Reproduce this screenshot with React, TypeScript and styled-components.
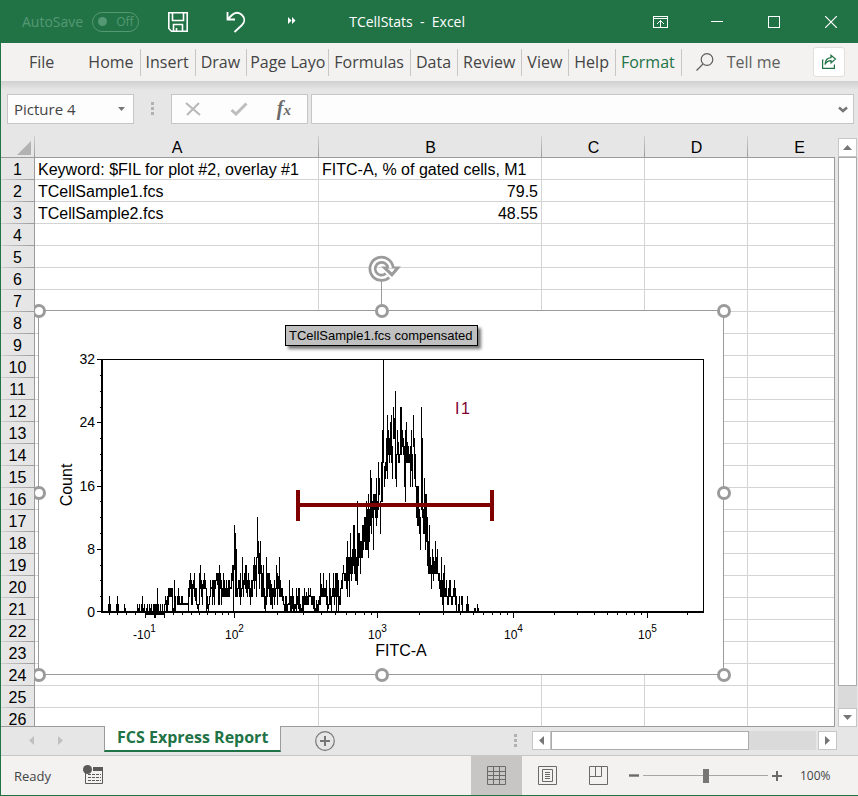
import React from "react";
import styled, { createGlobalStyle } from "styled-components";

const GREEN = "#217346";
const UI = '"Open Sans", "Noto Sans", sans-serif';
const ARIAL = '"Liberation Sans", Arial, sans-serif';

const Global = createGlobalStyle`
  *, *::before, *::after { box-sizing: border-box; }
  html, body { margin: 0; padding: 0; }
  button, input, select { font-family: inherit; color: inherit; margin: 0; border-radius: 0; }
  button { padding: 0; border: 0; background: none; }
  svg { display: block; flex: none; }
`;

const Window = styled.div`
  display: flex;
  flex-direction: column;
  height: 100vh;
  overflow: hidden;
  background: #e6e6e6;
  border-left: 1px solid ${GREEN};
  border-bottom: 1px solid ${GREEN};
  font-family: ${UI};
  color: #444;
`;

/* ---------- title bar ---------- */

const TitleBar = styled.header`
  display: flex;
  align-items: center;
  flex: none;
  height: 43px;
  padding-left: 21px;
  background: ${GREEN};
  color: #fff;
  font-size: 14px;
`;

const AutoSave = styled.label`
  display: flex;
  align-items: center;
  gap: 9px;
  height: 40px;
  color: #559874;
`;

const Toggle = styled.button`
  display: flex;
  align-items: center;
  gap: 9px;
  width: 47px;
  height: 20px;
  padding-left: 5px;
  border: 1px solid #559874;
  border-radius: 10px;
  color: #559874;
  font-size: 12px;
  &::before {
    content: "";
    width: 9px;
    height: 9px;
    border-radius: 50%;
    background: #559874;
  }
`;

const QuickTools = styled.div`
  display: flex;
  align-items: center;
  gap: 38px;
  margin-left: 29px;
`;

const IconButton = styled.button`
  display: flex;
  align-items: center;
  justify-content: center;
`;

const Title = styled.h1`
  flex: 1;
  margin: 0;
  padding-left: 49px;
  font-size: 14px;
  font-weight: 400;
  line-height: 40px;
  white-space: pre;
`;

const WindowButtons = styled.div`
  display: flex;
  gap: 3px;
`;

const WindowButton = styled(IconButton)`
  width: 54px;
  height: 42px;
`;

/* ---------- ribbon tabs ---------- */

const Ribbon = styled.nav`
  display: flex;
  align-items: center;
  flex: none;
  height: 38px;
  background: #f3f2f1;
  font-size: 16px;
`;

const RibbonTab = styled.button<{ $file?: boolean; $active?: boolean; $tight?: boolean }>`
  flex: none;
  height: 27px;
  padding: ${(p) => (p.$tight ? "0 3px" : "0 6px 0 5px")};
  text-align: left;
  white-space: nowrap;
  line-height: 26px;
  font-size: 16px;
  color: ${(p) => (p.$active ? GREEN : "#444")};
  border-right: 1px solid ${(p) => (p.$file ? "transparent" : "#c8c6c4")};
  margin: ${(p) => (p.$file ? "0 22px 0 23px" : "0")};
`;

const TellMe = styled.button`
  display: flex;
  align-items: center;
  gap: 13px;
  margin-left: 14px;
  font-size: 16px;
  color: #605e5c;
`;

const Share = styled(IconButton)`
  width: 32px;
  height: 30px;
  margin: 0 13px 0 auto;
  background: #fff;
  border: 1px solid #e1dfdd;
  border-radius: 3px;
`;

/* ---------- formula bar ---------- */

const FormulaBar = styled.div`
  display: flex;
  flex: none;
  height: 55px;
  padding: 13px 4px 0 6px;
  background: linear-gradient(#d0d0d0, #e6e6e6 9px);
`;

const Field = styled.div<{ $grow?: boolean }>`
  display: flex;
  align-items: center;
  height: 30px;
  width: ${(p) => (p.$grow ? "auto" : "127px")};
  flex: ${(p) => (p.$grow ? "1" : "none")};
  background: #fdfdfd;
  border: 1px solid #c6c6c6;
`;

const NameSelect = styled.select`
  flex: 1;
  height: 28px;
  padding: 0 0 0 6px;
  appearance: none;
  border: 0;
  background: transparent;
  font-size: 15px;
`;

const FormulaInput = styled.input`
  flex: 1;
  min-width: 0;
  height: 28px;
  padding: 0 8px;
  border: 0;
  outline: 0;
  background: transparent;
  font-size: 15px;
`;

const FieldArrow = styled.span<{ $inset?: boolean }>`
  padding-right: ${(p) => (p.$inset ? "8px" : "5px")};
  pointer-events: none;
`;

const Dots = styled.span`
  display: flex;
  flex-direction: column;
  flex: none;
  gap: 2px;
  width: 3px;
  &::before, &::after, i {
    content: "";
    display: block;
    width: 3px;
    height: 3px;
    background: #b1b1b1;
  }
`;

const FormulaDots = styled.div`
  display: flex;
  align-items: center;
  justify-content: center;
  width: 37px;
  height: 28px;
`;

const FormulaActions = styled.div`
  display: flex;
  align-items: center;
  justify-content: space-between;
  width: 137px;
  height: 30px;
  margin-right: 3px;
  padding: 0 16px 0 13px;
  background: #fdfdfd;
  border: 1px solid #c6c6c6;
`;

const FxLabel = styled.span`
  font: italic bold 20px/26px "Liberation Serif", serif;
  color: #6a6a6a;
  small { font-size: 15px; }
`;

/* ---------- sheet ---------- */

const SheetArea = styled.main`
  display: flex;
  flex: 1;
  min-height: 0;
`;

const Sheet = styled.div`
  position: relative;
  flex: 1;
  min-width: 0;
  overflow: hidden;
  background: #fff;
  border-bottom: 1px solid #9b9b9b;
  &::after {
    content: "";
    position: absolute;
    inset: 22px 0 0 auto;
    width: 1px;
    background: #9b9b9b;
  }
`;

const Grid = styled.table`
  table-layout: fixed;
  width: 100%;
  min-width: 850px;
  border-spacing: 0;
  font: 16px/19px ${ARIAL};
  color: #000;
`;

const Col = styled.col<{ $w?: number }>`
  width: ${(p) => (p.$w ? `${p.$w}px` : "auto")};
`;

const ColHead = styled.th`
  height: 22px;
  padding: 2px 0 0;
  font-weight: 400;
  border-bottom: 1px solid #9b9b9b;
  background: linear-gradient(#d0d0d0, #9b9b9b) right / 1px 100% no-repeat #e6e6e6;
`;

const Corner = styled.td`
  height: 22px;
  padding: 2px 0 0 16px;
  border-bottom: 1px solid #9b9b9b;
  background: linear-gradient(#d0d0d0, #9b9b9b) right / 1px 100% no-repeat #e6e6e6;
`;

const RowHead = styled.th`
  height: 22px;
  padding: 1px 0 0;
  font-weight: 400;
  line-height: 20px;
  border-right: 1px solid #9b9b9b;
  background: linear-gradient(90deg, #d0d0d0, #9b9b9b) bottom / 100% 1px no-repeat #e6e6e6;
`;

const Cell = styled.td<{ $right?: boolean }>`
  height: 22px;
  padding: 2px 3px 0;
  white-space: nowrap;
  text-align: ${(p) => (p.$right ? "right" : "left")};
  border-right: 1px solid #d4d4d4;
  border-bottom: 1px solid #d4d4d4;
`;

const ObjectLayer = styled.div`
  position: absolute;
  inset: 22px 0 0 34px;
  overflow: hidden;
`;

const Picture = styled.figure`
  position: absolute;
  left: 3px;
  top: 152px;
  width: 686px;
  height: 365px;
  margin: 0;
  background: #fff;
  border: 1px solid #9b9b9b;
`;

const HandleFrame = styled.div`
  position: absolute;
  inset: 0 -1px -1px 0;
`;

const Handle = styled.span<{ $x: number; $y: number }>`
  position: absolute;
  left: calc(${(p) => p.$x}% - 7px);
  top: calc(${(p) => p.$y}% - 7px);
  width: 14px;
  height: 14px;
  border: 3px solid #9b9b9b;
  border-radius: 50%;
  background: #fff;
`;

const Rotate = styled.div`
  position: absolute;
  left: 328px;
  bottom: 100%;
  height: 56px;
`;

const ChartTitle = styled.figcaption`
  position: absolute;
  left: 246px;
  top: 14px;
  height: 21px;
  padding: 0 4px 0 3px;
  font: 13px/20px ${ARIAL};
  white-space: nowrap;
  color: #000;
  background: #c0c0c0;
  border: 1px solid #000;
  box-shadow: 3px 3px 3px #777;
`;

/* ---------- scroll bars ---------- */

const VScroll = styled.div`
  display: flex;
  flex-direction: column;
  flex: none;
  width: 19px;
  margin: 2px 1px 0 3px;
`;

const ScrollButton = styled.button`
  display: flex;
  align-items: center;
  justify-content: center;
  flex: none;
  width: 19px;
  height: 19px;
  background: #fff;
  border: 1px solid #c6c6c6;
`;

const VTrack = styled.div`
  flex: 1;
  min-height: 0;
  background: #dadada;
`;

const VThumb = styled.div`
  height: 96%;
  background: #fff;
  border: 1px solid #ababab;
`;

const TabStrip = styled.div`
  display: flex;
  flex: none;
  height: 29px;
  border-bottom: 1px solid #c6c6c6;
`;

const SheetNav = styled.div`
  display: flex;
  gap: 24px;
  width: 103px;
  padding: 9px 0 0 28px;
  align-items: flex-start;
`;

const SheetTab = styled.button`
  position: relative;
  height: 26px;
  margin-top: -1px;
  padding: 0 12px 2px;
  background: #fff;
  border-left: 1px solid #9b9b9b;
  border-right: 1px solid #9b9b9b;
  border-bottom: 2px solid ${GREEN};
  color: ${GREEN};
  font-size: 16px;
  font-weight: 700;
  line-height: 22px;
  white-space: nowrap;
`;

const AddSheet = styled(IconButton)`
  margin-left: 34px;
  height: 27px;
`;

const HScroll = styled.div`
  display: flex;
  align-items: center;
  margin-left: auto;
  padding-right: 21px;
  height: 27px;
`;

const HTrack = styled.div`
  width: 265px;
  height: 19px;
  margin-right: 2px;
  background: #dadada;
`;

const HThumb = styled.div`
  width: 198px;
  height: 19px;
  background: #fff;
  border: 1px solid #ababab;
`;

const ScrollDots = styled.div`
  margin-right: 15px;
`;

/* ---------- status bar ---------- */

const StatusBar = styled.footer`
  display: flex;
  align-items: center;
  flex: none;
  height: 39px;
  padding-left: 13px;
  background: #f3f2f1;
  font-size: 13px;
`;

const Macro = styled(IconButton)`
  margin-left: 32px;
  padding-bottom: 2px;
`;

const Views = styled.div`
  display: flex;
  margin-left: auto;
`;

const ViewButton = styled(IconButton)<{ $on?: boolean }>`
  width: 51px;
  height: 39px;
  background: ${(p) => (p.$on ? "#c8c6c4" : "transparent")};
`;

const ZoomControls = styled.div`
  display: flex;
  align-items: center;
  gap: 4px;
  margin-left: 5px;
`;

const Slider = styled.input`
  width: 125px;
  height: 14px;
  appearance: none;
  background: linear-gradient(#a6a6a6, #a6a6a6) center / 100% 1px no-repeat;
  &::-webkit-slider-thumb {
    appearance: none;
    width: 6px;
    height: 14px;
    background: #767676;
  }
`;

const ZoomValue = styled.output`
  width: 72px;
  padding-left: 14px;
  font-size: 12px;
`;

/* ---------- chart ---------- */

const ChartSvg = styled.svg`
  position: absolute;
  left: 0;
  top: 0;
  font-family: ${ARIAL};
  fill: #000;
`;

/* Runs of "low-high" counts, one entry per horizontal pixel from the start. */
const RUNS: [number, string][] = [
  [108, "0-1 0-2 0-1"],
  [116, "0-1 0-2 0-1"],
  [124, "0-1 0-.5"],
  [137, "0-1 0-.5 0-1 0-0 0-1 0-2 0-.5 0-1 0-0 0-.5 0-1 0-0 0-1 0-.5 0-1 0-0 0-1 0-1 0-1 0-1 0-3 0-1 0-0 0-1 0-0 0-1 0-0 0-1 1-2 0-1.5 0-2 1-3 2-3 2-3 2-3 0-3 0-.5"],
  [174, "0-4 0-2 0-0 1-2 1-3 1-2 1-1.2 1-2 1-2 1-1.2 1-1.2 1-1.2 1-1.2 1-1.2 0-3 2-4 3-5 1-4 1-3.5 3-4 2-5 1.5-3 1-3 .5-1 0-1 1-5"],
  [200, "3-6 2-4 1-3.5 3-4 3-5 3-4 0-3 .5-2 0-1 1-2 2-4 3-3.2 1-4 2-4 1-4 3-4 4-5 3.5-5 1-5 1-6"],
  [220, "3-5 1-4 2-3 2-5 2-4 2-3 2-4 2-3 2-4 2-4 3-3.2 3-5 4-6 0-6 5.5-11 2-10 2-8 2-3 3-4 2-4"],
  [240, "1-5 2-3 3-7 2-4 3.5-5 3-6 2.5-6 2-4 3-5 2-4 1-3 2-4 2-4 4-6 3-7 4-6 2-7 7-12 5-9 3-7.5"],
  [260, "5-9 2-6 2-5 2-6 .5-3 0-2 1-7 2-5 3-5 2-5 1-4 1-3.5 .5-3 2-3 1-4 2-3 3-6 1-5 3-4.5 2-7"],
  [280, "2-4 2-3 1.5-3 1-2 0-1 0-2 0-2 0-1 1-1.2 1-4 0-2 0-2 .5-3 0-2 0-1 .5-1 0-3 1-2 .5-3 0-3"],
  [300, "0-1 0-.5 0-2 0-2 1-3 1-2 1-2.5 1-2 1-3 2-2.2 2-3 1-2 1-2 .5-2 0-2 0-.5 0-1.5 0-1 0-1.5 1-2"],
  [320, "1-5 2-3.5 2-3 2-5 2-3 2-3 1-4 0-2 .5-1 1-5 1-3 0-2 2-3 2-5 1-3 2-5 0-5 2-5 0-4 1-2"],
  [340, "1-3 3-4 3-5 5-6 4-5 4-5 3-7 2-9 4-7 2-7 5-10 4-7 5-8 6-11 5-11 4-8 4-7 3.5-14 6-10 7-10"],
  [360, "5-9 7-9 7-11 8-11 9-12 8-12 8-14 8-13 7-15 9-13 11-18 10-17 12-14 8-15 13-15 12-15 11-17 12-14 13-19 15-17"],
  [380, "10-14 14-19 14-23 19-32 16-18.5 17-19 18-22 17-25 20-23 19-22 20-24 19-25 17-21 22-26 22-24.5 17-28 16-20 20-23 19-21.5 19-20"],
  [400, "20-26 20-26 21-23 20-22 16-21 14-23 19-24 19-21.5 19-21 19-20 16-21 18-23 16-20 21-25 17-22 16-20 12-16 11-16 11-16 10-13"],
  [420, "8-12 13-26 12-22 10-13 10-17 8-15 9-15 6-12 5-9 5-11 5-7 3-6 5-8 4-7 5-6.5 5-9 5-7 5-8 4-5 3-5"],
  [440, "2-4 2-7 1-4 0-5 2-6 2-3 2-4 1-2 1-3 2-4 2-4 1-2 1-2 2-3 2-4 1-3 0-2 0-0 0-1 0-2 0-0 1-2 0-2"],
  [466, "0-1 0-2 0-1"],
  [474, "0-.5 0-.5 0-0 0-1 0-.5"],
];

const yOf = (count: number) => Math.round(612 - count * 7.9);

const histogram = RUNS.map(([start, run]) =>
  run
    .split(" ")
    .map((pair, i) => {
      const [low, high] = pair.split("-").map(Number);
      return `M${start + i + 0.5} ${yOf(low) + 1}V${yOf(high)}`;
    })
    .join("")
).join("");

const MINOR = [
  109, 117, 126, 135, 173, 182, 191, 199, 207, 215, 222, 228, 277, 303, 321, 335, 346, 355, 364, 371,
  419, 443, 460, 473, 483, 492, 500, 507, 554, 577, 594, 607, 617, 626, 634, 641, 687,
];
const MAJOR = [145, 164, 234, 377, 513, 647];
const X_LABELS: [number, string, string][] = [
  [133, "-10", "1"],
  [225, "10", "2"],
  [368, "10", "3"],
  [504, "10", "4"],
  [638, "10", "5"],
];

function Chart() {
  return (
    <ChartSvg width="684" height="363" viewBox="39 311 684 363" role="img" aria-label="FITC-A histogram">
      <g shapeRendering="crispEdges" stroke="#000" fill="none">
        <path d="M102 359.5H703.5V612" />
        <path d="M102 359V613M101 612H704" strokeWidth="2" />
        <path d={[0, 8, 16, 24, 32].map((v) => `M97 ${yOf(v) - 0.5 + (v ? 1 : 0)}h4`).join("")} />
        <path d={[2, 4, 6, 10, 12, 14, 18, 20, 22, 26, 28, 30].map((v) => `M100 ${yOf(v) + 0.5}h2`).join("")} />
        <path d={MAJOR.map((x) => `M${x + 0.5} 613v5`).join("") + MINOR.map((x) => `M${x + 0.5} 613v2`).join("")} />
        <path d="M145 614H165" strokeWidth="2" />
        <path d="M155 613V618" strokeWidth="2" />
        <path d={histogram} />
      </g>
      <g shapeRendering="crispEdges" fill="#800000">
        <rect x="296" y="490" width="4" height="31" />
        <rect x="490" y="490" width="4" height="31" />
        <rect x="299" y="503" width="192" height="4" />
      </g>
      <g fontSize="14" textAnchor="end">
        {[0, 8, 16, 24, 32].map((v) => (
          <text key={v} x="95" y={yOf(v) + 5}>{v}</text>
        ))}
      </g>
      {X_LABELS.map(([x, base, power]) => (
        <text key={x} x={x} y="639" fontSize="12">
          {base}
          <tspan dy="-7" fontSize="10">{power}</tspan>
        </text>
      ))}
      <text x="401" y="656" fontSize="16" textAnchor="middle">FITC-A</text>
      <text fontSize="16" textAnchor="middle" transform="translate(72 485) rotate(-90)">Count</text>
      <text x="455 461" y="414" fontSize="16" fill="#800030">I1</text>
    </ChartSvg>
  );
}

/* ---------- icons ---------- */

const Triangle = ({ dir, color = "#767676", size = 5 }: { dir: "up" | "down" | "left" | "right"; color?: string; size?: number }) => {
  const s = size;
  const d = {
    up: `M0 ${s}H${2 * s - 1}L${s - 0.5} 0Z`,
    down: `M0 0H${2 * s - 1}L${s - 0.5} ${s}Z`,
    left: `M${s} 0V${2 * s - 1}L0 ${s - 0.5}Z`,
    right: `M0 0V${2 * s - 1}L${s} ${s - 0.5}Z`,
  }[dir];
  const vertical = dir === "up" || dir === "down";
  return (
    <svg width={vertical ? 2 * s - 1 : s} height={vertical ? s : 2 * s - 1}>
      <path d={d} fill={color} />
    </svg>
  );
};

const SaveIcon = () => (
  <svg width="20" height="20" fill="none" stroke="#fff" strokeWidth="1.6">
    <path d="M.8 .8H19.2V19.2H3.5L.8 16.5ZM4.5 .8V8.5H15.5V.8M5.5 19V12.5H14.5V19M8.5 19V16" />
  </svg>
);

const UndoIcon = () => (
  <svg width="20" height="22" fill="none" stroke="#fff" strokeWidth="1.8">
    <path d="M1.5 1V8.5H9M2 8L6 4C9 1 13 1 16 4C19 7 19 11 16 14L8.5 21" />
  </svg>
);

const cells: Record<string, [string, string]> = {
  1: ["Keyword: $FIL for plot #2, overlay #1", "FITC-A, % of gated cells, M1"],
  2: ["TCellSample1.fcs", "79.5"],
  3: ["TCellSample2.fcs", "48.55"],
};

const TABS = ["Home", "Insert", "Draw", "Page Layo", "Formulas", "Data", "Review", "View", "Help", "Format"];
const HANDLES = [[0, 0], [50, 0], [100, 0], [0, 50], [100, 50], [0, 100], [50, 100], [100, 100]];

export default function App() {
  return (
    <Window>
      <Global />
      <TitleBar>
        <AutoSave>
          AutoSave
          <Toggle role="switch" aria-checked="false">Off</Toggle>
        </AutoSave>
        <QuickTools>
          <IconButton aria-label="Save"><SaveIcon /></IconButton>
          <IconButton aria-label="Undo"><UndoIcon /></IconButton>
          <IconButton aria-label="More commands">
            <svg width="16" height="14" fill="#fff"><path d="M4 2L7.500 5.500L4 9ZM8 2L11.500 5.500L8 9Z" /></svg>
          </IconButton>
        </QuickTools>
        <Title>{"TCellStats  -  Excel"}</Title>
        <WindowButtons>
          <WindowButton aria-label="Ribbon display options">
            <svg width="15" height="12" fill="none" stroke="#fff" shapeRendering="crispEdges">
              <path d="M.5 .5H14.5V11.5H.5ZM0 2.5H15M7.5 4V12" />
              <path d="M4 8L7.5 4.5L11 8" shapeRendering="auto" />
            </svg>
          </WindowButton>
          <WindowButton aria-label="Minimize">
            <svg width="12" height="1"><path d="M0 .5H12" stroke="#fff" /></svg>
          </WindowButton>
          <WindowButton aria-label="Maximize">
            <svg width="12" height="12"><rect x=".5" y=".5" width="11" height="11" fill="none" stroke="#fff" /></svg>
          </WindowButton>
          <WindowButton aria-label="Close">
            <svg width="12" height="12"><path d="M0 0L12 12M12 0L0 12" stroke="#fff" strokeWidth="1.2" /></svg>
          </WindowButton>
        </WindowButtons>
      </TitleBar>

      <Ribbon>
        <RibbonTab $file>File</RibbonTab>
        {TABS.map((t) => (
          <RibbonTab key={t} $active={t === "Format"} $tight={t === "Page Layo"}>{t}</RibbonTab>
        ))}
        <TellMe>
          <svg width="18" height="18" fill="none" stroke="#605e5c" strokeWidth="1.2">
            <circle cx="11" cy="6.5" r="5.8" /><path d="M7 11L.5 17.5" />
          </svg>
          Tell me
        </TellMe>
        <Share aria-label="Share">
          <svg width="16" height="16" fill="none" stroke={GREEN} strokeWidth="1.2">
            <path d="M2.5 6H1.6V14.4H13.4V10.5" />
            <path d="M10 1.2L14.5 5L10 9V6.6C7.500 6.600 5.500 7.500 4 10.500C4.200 6.500 6.300 4 10 3.700Z" />
          </svg>
        </Share>
      </Ribbon>

      <FormulaBar>
        <Field>
          <NameSelect aria-label="Name box"><option>Picture 4</option></NameSelect>
          <FieldArrow $inset><Triangle dir="down" size={4} /></FieldArrow>
        </Field>
        <FormulaDots><Dots><i /></Dots></FormulaDots>
        <FormulaActions>
          <IconButton aria-label="Cancel">
            <svg width="16" height="14"><path d="M1 1L15 13M14 1L2 13" stroke="#b8b8b8" strokeWidth="2" /></svg>
          </IconButton>
          <IconButton aria-label="Enter">
            <svg width="18" height="14"><path d="M1.500 8L6 12L16.500 1.500" fill="none" stroke="#bdbdbd" strokeWidth="3" /></svg>
          </IconButton>
          <IconButton aria-label="Insert function"><FxLabel>f<small>x</small></FxLabel></IconButton>
        </FormulaActions>
        <Field $grow>
          <FormulaInput aria-label="Formula" />
          <FieldArrow>
            <svg width="10" height="7"><path d="M1 1.500L5 5L9 1.500" fill="none" stroke="#767676" strokeWidth="2.500" /></svg>
          </FieldArrow>
        </Field>
      </FormulaBar>

      <SheetArea>
        <Sheet>
          <Grid>
            <colgroup>
              <Col $w={34} /><Col $w={284} /><Col $w={223} /><Col $w={103} /><Col $w={103} /><Col />
            </colgroup>
            <thead>
              <tr>
                <Corner>
                  <svg width="14" height="14"><path d="M14 0V14H0Z" fill="#b2b2b2" /></svg>
                </Corner>
                {["A", "B", "C", "D", "E"].map((c) => <ColHead key={c} scope="col">{c}</ColHead>)}
              </tr>
            </thead>
            <tbody>
              {Array.from({ length: 26 }, (_, i) => i + 1).map((r) => (
                <tr key={r}>
                  <RowHead scope="row">{r}</RowHead>
                  <Cell>{cells[r]?.[0]}</Cell>
                  <Cell $right={r > 1}>{cells[r]?.[1]}</Cell>
                  <Cell /><Cell /><Cell />
                </tr>
              ))}
            </tbody>
          </Grid>
          <ObjectLayer>
            <Picture>
              <Chart />
              <ChartTitle>TCellSample1.fcs compensated</ChartTitle>
              <Rotate>
                <svg width="36" height="56" fill="none" stroke="#9b9b9b">
                  <path d="M14.500 26V50" />
                  <path d="M20.500 20.500A9 9 0 1 1 23.500 13" strokeWidth="8" />
                  <path d="M14 11.500H34L25 22Z" fill="#9b9b9b" stroke="none" />
                  <path d="M20.500 20.500A9 9 0 1 1 23.500 13" stroke="#fff" strokeWidth="2.500" />
                  <path d="M20.500 13.500H28L25 17.500Z" fill="#fff" stroke="none" />
                </svg>
              </Rotate>
              <HandleFrame>
                {HANDLES.map(([x, y]) => <Handle key={`${x}-${y}`} $x={x} $y={y} />)}
              </HandleFrame>
            </Picture>
          </ObjectLayer>
        </Sheet>
        <VScroll>
          <ScrollButton aria-label="Scroll up"><Triangle dir="up" /></ScrollButton>
          <VTrack><VThumb /></VTrack>
          <ScrollButton aria-label="Scroll down"><Triangle dir="down" /></ScrollButton>
        </VScroll>
      </SheetArea>

      <TabStrip>
        <SheetNav>
          <IconButton aria-label="Previous sheet"><Triangle dir="left" color="#c0c0c0" /></IconButton>
          <IconButton aria-label="Next sheet"><Triangle dir="right" color="#c0c0c0" /></IconButton>
        </SheetNav>
        <SheetTab>FCS Express Report</SheetTab>
        <AddSheet aria-label="New sheet">
          <svg width="20" height="20" fill="none" stroke="#767676">
            <circle cx="10" cy="10" r="9.300" strokeWidth="1.200" /><path d="M10 5V15M5 10H15" strokeWidth="2" />
          </svg>
        </AddSheet>
        <HScroll>
          <ScrollDots><Dots><i /></Dots></ScrollDots>
          <ScrollButton aria-label="Scroll left"><Triangle dir="left" /></ScrollButton>
          <HTrack><HThumb /></HTrack>
          <ScrollButton aria-label="Scroll right"><Triangle dir="right" /></ScrollButton>
        </HScroll>
      </TabStrip>

      <StatusBar>
        Ready
        <Macro aria-label="Record macro">
          <svg width="21" height="20">
            <path d="M2.500 8V18.500H19.500V2" fill="none" stroke="#5a5a5a" />
            <rect x="10" y="2" width="10" height="4" fill="#5a5a5a" />
            <path d="M5 9.500H18M5 12.500H18M5 15.500H18" stroke="#5a5a5a" strokeDasharray="3 1" />
            <circle cx="4.500" cy="4.500" r="4.500" fill="#5a5a5a" />
          </svg>
        </Macro>
        <Views>
          <ViewButton $on aria-label="Normal view">
            <svg width="19" height="19" fill="none" stroke="#6a6a6a">
              <path d="M.5 .5H18.500V18.500H.5ZM6.500 0V19M12.500 0V19M0 5.500H19M0 9.500H19M0 13.500H19" />
            </svg>
          </ViewButton>
          <ViewButton aria-label="Page layout view">
            <svg width="19" height="19" fill="none" stroke="#6a6a6a">
              <path d="M.5 .5H18.500V18.500H.5ZM4.500 3.500H14.500V15.500H4.500ZM7 6.500H12M7 8.500H12M7 10.500H12M7 12.500H12" />
            </svg>
          </ViewButton>
          <ViewButton aria-label="Page break view">
            <svg width="19" height="19" fill="none" stroke="#6a6a6a">
              <path d="M.5 .5H18.500V18.500H.5ZM.5 10.500H12.500V.5M6.500 0V10" />
            </svg>
          </ViewButton>
        </Views>
        <ZoomControls>
          <IconButton aria-label="Zoom out">
            <svg width="10" height="10"><path d="M0 4.500H10" stroke="#6a6a6a" strokeWidth="2.400" /></svg>
          </IconButton>
          <Slider type="range" min="0" max="100" defaultValue="50" aria-label="Zoom" />
          <IconButton aria-label="Zoom in">
            <svg width="10" height="10"><path d="M0 5H10M5 0V10" stroke="#6a6a6a" strokeWidth="2" /></svg>
          </IconButton>
          <ZoomValue>100%</ZoomValue>
        </ZoomControls>
      </StatusBar>
    </Window>
  );
}
